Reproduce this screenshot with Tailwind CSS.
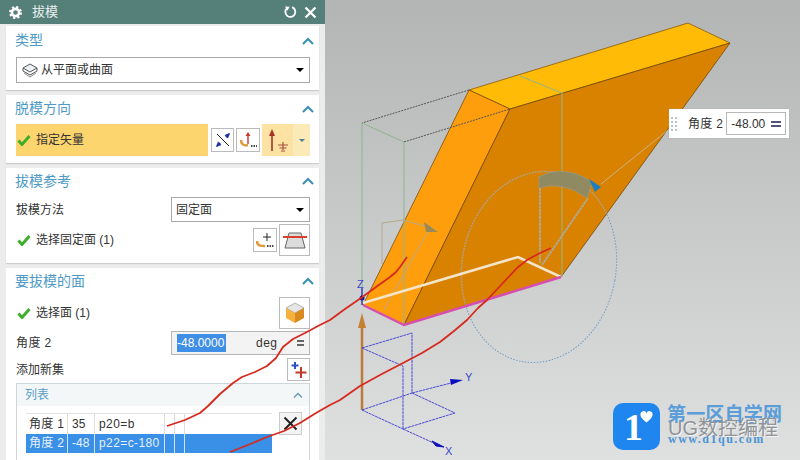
<!DOCTYPE html>
<html lang="zh">
<head>
<meta charset="UTF-8">
<title>拔模</title>
<script src="https://cdn.jsdelivr.net/npm/@tailwindcss/browser@4"></script>
</head>
<body class="m-0 overflow-hidden">
<div class="relative flex w-[800px] h-[460px] overflow-hidden font-['Liberation_Sans','Noto_Sans_CJK_SC',sans-serif] text-[12px] text-[#333]">

  <!-- dialog -->
  <aside class="flex flex-col w-[325px] h-full shrink-0 bg-[#ececec] overflow-hidden">
    <header class="flex items-center h-[24px] shrink-0 bg-[#558079] text-[#e8efee] text-[13px] pl-[9px] pr-[8px]">
      <svg width="13" height="13" viewBox="0 0 13 13"><circle cx="6.5" cy="6.5" r="3.6" fill="none" stroke="#fff" stroke-width="2.6"/><circle cx="6.5" cy="6.5" r="5.5" fill="none" stroke="#fff" stroke-width="2" stroke-dasharray="2.2 2.12"/></svg>
      <span class="ml-[10px]">拔模</span>
      <svg class="ml-auto" width="14" height="14" viewBox="0 0 14 14"><path d="M4 3.2A5 5 0 1 0 9 2.2" fill="none" stroke="#fff" stroke-width="1.8"/><path d="M2 1.5L6.5 1.8 4.5 5.8Z" fill="#fff"/></svg>
      <svg class="ml-[7px]" width="13" height="13" viewBox="0 0 13 13"><path d="M1.5 1.5L11.5 11.5M11.5 1.5L1.5 11.5" stroke="#fff" stroke-width="2.2"/></svg>
    </header>

    <div class="flex flex-col gap-[5px] pt-[2px] px-[6px] flex-1">
      <!-- 类型 -->
      <section class="h-[64px] bg-white pl-[10px] pr-[9px] shadow-[0_1px_1px_#ccc]">
        <div class="flex items-center justify-between h-[28px] pt-[1px] text-[14px] text-[#4d9ac6]">
          <span class="-ml-[1px]">类型</span>
          <svg width="12" height="8" viewBox="0 0 12 8" class="mr-[-4px]"><path d="M1 7L6 2L11 7" fill="none" stroke="#3a8db5" stroke-width="2"/></svg>
        </div>
        <div class="flex items-center justify-between h-[26px] mt-[3px] border border-[#a9a9a9] pl-[4px] pr-[5px]">
          <span class="flex items-center gap-[2px]">
            <svg width="18" height="16" viewBox="0 0 18 16"><path d="M9 2L16 6 9 10 2 6Z" fill="#eef1f3" stroke="#555"/><path d="M2 6V9L9 13 16 9V6" fill="none" stroke="#555"/><path d="M3 11L9 15 15 11" fill="none" stroke="#888"/></svg>
            从平面或曲面
          </span>
          <span class="w-0 h-0 border-x-[4px] border-x-transparent border-t-[4px] border-t-black"></span>
        </div>
      </section>

      <!-- 脱模方向 -->
      <section class="h-[68px] bg-white pl-[10px] pr-[9px] shadow-[0_1px_1px_#ccc]">
        <div class="flex items-center justify-between h-[27px] text-[14px] text-[#4d9ac6]">
          <span class="-ml-[1px]">脱模方向</span>
          <svg width="12" height="8" viewBox="0 0 12 8" class="mr-[-4px]"><path d="M1 7L6 2L11 7" fill="none" stroke="#3a8db5" stroke-width="2"/></svg>
        </div>
        <div class="flex items-center h-[32px] mt-[2px]">
          <div class="flex items-center w-[192px] h-full bg-[#fdd56e] pl-[1px]">
            <svg width="14" height="12" viewBox="0 0 14 12"><path d="M1.5 6.5L5 10.5 12.5 2" fill="none" stroke="#3fae2a" stroke-width="3"/></svg>
            <span class="ml-[5px]">指定矢量</span>
          </div>
          <div class="flex items-center justify-center w-[23px] h-[24px] ml-[3px] border border-[#bbb] bg-white">
            <svg width="16" height="16" viewBox="0 0 16 16"><path d="M2 2L14 14" stroke="#222" stroke-width="1"/><path d="M14 2L11 5M5 11L2 14" stroke="#2230a8" stroke-width="2"/><path d="M15 1L9.5 3 13 6.5ZM1 15L6.5 13 3 9.5Z" fill="#2230a8"/></svg>
          </div>
          <div class="flex items-center justify-center w-[24px] h-[24px] ml-[2px] border border-[#bbb] bg-white">
            <svg width="18" height="18" viewBox="0 0 18 18"><path d="M9 13V4" stroke="#c0392b" stroke-width="1.4"/><path d="M9 1L6.5 5H11.5Z" fill="#c0392b"/><path d="M2 9C2 14 6 15 9 14" fill="none" stroke="#e09a3a" stroke-width="2.4"/><path d="M12 15h1.5M14.5 15H16M17 15h1" stroke="#111" stroke-width="1.6"/></svg>
          </div>
          <div class="flex items-center h-full ml-[2px]">
            <div class="flex items-center justify-center w-[31px] h-full bg-[#fce3a4]">
              <svg width="24" height="24" viewBox="0 0 24 24"><path d="M6 23V6" stroke="#a93226" stroke-width="1.6"/><path d="M6 1L3 8H9Z" fill="#a93226"/><path d="M17 14V22M12 17H22M13.5 20H20.500M15 23H19" stroke="#a8503c" stroke-width="1.2"/></svg>
            </div>
            <div class="flex items-center justify-center w-[17px] h-full bg-[#fbe9b8]">
              <span class="w-0 h-0 border-x-[3px] border-x-transparent border-t-[3px] border-t-[#4a7d9c]"></span>
            </div>
          </div>
        </div>
      </section>

      <!-- 拔模参考 -->
      <section class="h-[95px] bg-white pl-[10px] pr-[9px] shadow-[0_1px_1px_#ccc]">
        <div class="flex items-center justify-between h-[26px] text-[14px] text-[#4d9ac6]">
          <span class="-ml-[1px]">拔模参考</span>
          <svg width="12" height="8" viewBox="0 0 12 8" class="mr-[-4px]"><path d="M1 7L6 2L11 7" fill="none" stroke="#3a8db5" stroke-width="2"/></svg>
        </div>
        <div class="flex items-center justify-between h-[25px] mt-[3px]">
          <span>拔模方法</span>
          <div class="flex items-center justify-between w-[139px] h-full border border-[#a9a9a9] pl-[4px] pr-[5px]">
            <span>固定面</span>
            <span class="w-0 h-0 border-x-[4px] border-x-transparent border-t-[4px] border-t-black"></span>
          </div>
        </div>
        <div class="flex items-center h-[32px] mt-[2px]">
          <svg class="ml-[1px]" width="14" height="12" viewBox="0 0 14 12"><path d="M1.500 6.500L5 10.500 12.500 2" fill="none" stroke="#3fae2a" stroke-width="3"/></svg>
          <span class="ml-[5px]">选择固定面 (1)</span>
          <div class="flex items-center justify-center w-[24px] h-[24px] ml-auto border border-[#bbb] bg-white">
            <svg width="18" height="18" viewBox="0 0 18 18"><path d="M11 2V10M7 6H15" stroke="#222" stroke-width="1"/><path d="M1 10C1 15 5 15 9 15" fill="none" stroke="#e09a3a" stroke-width="2.600"/><path d="M11 15h1.500M13.500 15H15M16 15h1.500" stroke="#111" stroke-width="1.600"/></svg>
          </div>
          <div class="flex items-center justify-center w-[31px] h-[32px] ml-[2px] border border-[#bbb] bg-white">
            <svg width="26" height="24" viewBox="0 0 26 24"><path d="M7 5H19L23 20H3Z" fill="#dcdcdc" stroke="#666"/><path d="M1 9H25" stroke="#d9402c" stroke-width="2"/></svg>
          </div>
        </div>
      </section>

      <!-- 要拔模的面 -->
      <section class="flex-1 min-h-0 bg-white pl-[10px] pr-[9px]">
        <div class="flex items-center justify-between h-[26px] text-[14px] text-[#4d9ac6]">
          <span class="-ml-[1px]">要拔模的面</span>
          <svg width="12" height="8" viewBox="0 0 12 8" class="mr-[-4px]"><path d="M1 7L6 2L11 7" fill="none" stroke="#3a8db5" stroke-width="2"/></svg>
        </div>
        <div class="flex items-center h-[32px] mt-[3px]">
          <svg class="ml-[1px]" width="14" height="12" viewBox="0 0 14 12"><path d="M1.500 6.500L5 10.500 12.500 2" fill="none" stroke="#3fae2a" stroke-width="3"/></svg>
          <span class="ml-[5px]">选择面 (1)</span>
          <div class="flex items-center justify-center w-[31px] h-[32px] ml-auto border border-[#bbb] bg-white">
            <svg width="22" height="24" viewBox="0 0 22 24"><path d="M11 2L20 7 11 12 2 7Z" fill="#e6e6e6" stroke="#999" stroke-width=".7"/><path d="M2 7L11 12V22L2 17Z" fill="#f6b03c"/><path d="M11 12L20 7V17L11 22Z" fill="#d98a1e"/></svg>
          </div>
        </div>
        <div class="flex items-center justify-between h-[24px] mt-[2px]">
          <span class="tracking-[0.4px]">角度 2</span>
          <div class="flex items-center w-[139px] h-full border border-[#b5b5b5] bg-[#f3f3f3] pl-[5px] pr-[4px]">
            <span class="w-[49px] h-[18px] leading-[18px] bg-[#3f8fe6] text-white text-[12px]">-48.0000</span>
            <span class="ml-[30px] tracking-[0.5px]">deg</span>
            <span class="ml-auto mr-[1px] flex flex-col gap-[2px]"><i class="block w-[7px] h-[2px] bg-[#666]"></i><i class="block w-[7px] h-[2px] bg-[#666]"></i></span>
          </div>
        </div>
        <div class="flex items-center justify-between h-[23px] mt-[3px]">
          <span>添加新集</span>
          <div class="flex items-center justify-center w-[23px] h-[23px] border border-[#bbb] bg-white">
            <svg width="18" height="18" viewBox="0 0 18 18"><path d="M5 1V8M1.500 4.500H8.500" stroke="#2b50c8" stroke-width="2"/><path d="M11 6V17M5.500 11.500H16.500" stroke="#c0392b" stroke-width="2"/></svg>
          </div>
        </div>
        <!-- 列表 -->
        <div class="relative h-[90px] mt-[2px] border border-[#cfd6da] bg-white">
          <div class="flex items-center justify-between h-[22px] pl-[8px] pr-[6px] bg-[#f4f7f8] text-[#5aa0c8]">
            <span>列表</span>
            <svg width="10" height="6" viewBox="0 0 10 6"><path d="M1 5.500L5 1.500 9 5.500" fill="none" stroke="#6b9db8" stroke-width="1.500"/></svg>
          </div>
          <div class="flex items-start mt-[7px] pl-[9px]">
            <div class="w-[246px] h-[60px] border-t border-[#e2e2e2] text-[12px]">
              <div class="grid grid-cols-[42px_27px_70px_10px_10px_87px] h-[20px] leading-[20px]">
                <span class="pl-[3px] border-r border-[#ddd] tracking-[0.3px]">角度 1</span>
                <span class="pl-[4px] border-r border-[#ddd]">35</span>
                <span class="pl-[4px] border-r border-[#ddd] tracking-[0.4px]">p20=b</span>
                <span class="border-r border-[#ddd]"></span>
                <span class="border-r border-[#ddd]"></span>
                <span></span>
              </div>
              <div class="grid grid-cols-[42px_27px_70px_10px_10px_87px] h-[19px] leading-[19px] bg-[#3a8fe6] text-[#e6f1fc]">
                <span class="pl-[3px] border-r border-[#cfe3f8] tracking-[0.3px]">角度 2</span>
                <span class="pl-[4px] border-r border-[#cfe3f8]">-48</span>
                <span class="pl-[4px] border-r border-[#cfe3f8] tracking-[0.4px]">p22=c-180</span>
                <span class="border-r border-[#cfe3f8]"></span>
                <span class="border-r border-[#cfe3f8]"></span>
                <span></span>
              </div>
            </div>
            <div class="flex items-center justify-center w-[23px] h-[23px] ml-[7px] -mt-px border border-[#ccc] bg-[#f4f4f4]">
              <svg width="15" height="15" viewBox="0 0 15 15"><path d="M1.500 1.500L13.500 13.500M13.500 1.500L1.500 13.500" stroke="#222" stroke-width="2"/></svg>
            </div>
          </div>
        </div>
      </section>
    </div>
  </aside>

  <!-- graphics window -->
  <main class="flex-1 h-full bg-gradient-to-b from-[#b3b4b4] to-[#dfe0e0]"></main>

  <!-- model and red markup: free canvas lying over both panes -->
  <svg class="absolute left-0 top-0" width="800" height="460" viewBox="0 0 800 460" fill="none">
    <defs>
      <clipPath id="faces"><path d="M469 90L510 109 730 43 561 277 404 325 363 305Z"/></clipPath>
    </defs>
    <!-- outside dotted circle -->
    <ellipse cx="539" cy="267" rx="77" ry="96" transform="rotate(10 539 267)" stroke="#6f9cc6" stroke-width="1" stroke-dasharray="1.500 1.500"/>
    <!-- solid -->
    <path d="M469 90L688 23 730 43 510 109Z" fill="#ffbb05" stroke="#8a5a10" stroke-width=".8"/>
    <path d="M469 90L510 109 404 325 363 305Z" fill="#ff9e0c" stroke="#7a5010" stroke-width=".8"/>
    <path d="M510 109L730 43 561 277 404 325Z" fill="#d98200" stroke="#6e4a10" stroke-width=".8"/>
    <!-- wire box -->
    <path d="M469 90L362 123M404 142L510 109" stroke="#555" stroke-width="1" stroke-dasharray="2 1"/>
    <path d="M362 123L404 142M362 123V305M404 142V325M520 76L562 93M562 93V277" stroke="#8fb592" stroke-width="1"/>
    <!-- angle handle -->
    <g clip-path="url(#faces)"><ellipse cx="539" cy="267" rx="77" ry="96" transform="rotate(10 539 267)" stroke="#b0a088" stroke-width="1.500" stroke-dasharray="2 1"/></g>
    <path d="M539 177Q565 164 592 182L587 198Q562 180 539 188Z" fill="#8f8a62" stroke="#8d9a92" stroke-width=".8"/>
    <path d="M540 188V263M542 265L588 198" stroke="#b3a68f" stroke-width="2" stroke-dasharray="3 .5"/>
    <path d="M601 184L668 130" stroke="#c9b28a" stroke-width="1"/>
    <path d="M589 179L601 187 595 192Z" fill="#1d7fc2"/>
    <!-- small helper arrow -->
    <path d="M382 264V223L403 220 428 227M428 231L384 310" stroke="#b4a88e" stroke-width="1"/>
    <path d="M424 222L438 232 426 232Z" fill="#9a8a58"/>
    <!-- edges -->
    <path d="M363 303L518 257 561 277" stroke="#f2e5cc" stroke-width="2.500"/>
    <path d="M363 305L404 325 561 277" stroke="#d64fb0" stroke-width="2.500"/>
    <!-- csys -->
    <path d="M362 288V305" stroke="#2222cc" stroke-width="1.200"/>
    <circle cx="362" cy="298" r="2.500" fill="#1c1c8c"/>
    <path d="M362 410V322" stroke="#b97a3a" stroke-width="2.500"/>
    <path d="M362 313L358 328H366Z" fill="#c5812f"/>
    <path d="M362 348L412 333V393M362 348L403 366V429M362 410L403 429M362 410L412 393M412 393L455 413 403 429M403 429L438 445M412 393L455 382" stroke="#4b4bd6" stroke-width="1" stroke-dasharray="3 .6"/>
    <path d="M450 379L463 380 451 385Z" fill="#0d0dc0"/>
    <path d="M432 441L444 447 436 446Z" fill="#0d0dc0" stroke="#0d0dc0"/>
    <text x="357" y="288" font-size="11" fill="#3a48c8" font-family="Liberation Sans">Z</text>
    <text x="465" y="381" font-size="11" fill="#3a48c8" font-family="Liberation Sans">Y</text>
    <text x="445" y="455" font-size="11" fill="#3a48c8" font-family="Liberation Sans">X</text>
    <!-- red markup -->
    <polyline points="167,426 185,420 200,413 208,406 220,394 233,383 242,377 255,372 267,366 276,358 283,347 293,339 305,333 318,326 330,320 345,309 361,298 376,287 390,277 396,272 400,267 407,257" stroke="#d62a1e" stroke-width="1.800" stroke-linejoin="round"/>
    <polyline points="230,452 248,445 267,437 284,431 300,423 316,413 330,405 340,400 360,386 380,375 403,363 422,353 440,342 454,331 467,320 478,308 487,300 502,284 517,268 527,260 540,253 551,248" stroke="#d62a1e" stroke-width="1.800" stroke-linejoin="round"/>
  </svg>

  <!-- on-screen input -->
  <div class="absolute left-[669px] top-[109px] flex items-center w-[120px] h-[29px] bg-white shadow-[0_0_1px_#999]">
    <span class="grid grid-cols-2 gap-x-[2px] gap-y-[2px] ml-[2px] w-[6px]"><i class="block w-[2px] h-[2px] bg-[#b5c4cc]"></i><i class="block w-[2px] h-[2px] bg-[#b5c4cc]"></i><i class="block w-[2px] h-[2px] bg-[#b5c4cc]"></i><i class="block w-[2px] h-[2px] bg-[#b5c4cc]"></i><i class="block w-[2px] h-[2px] bg-[#b5c4cc]"></i><i class="block w-[2px] h-[2px] bg-[#b5c4cc]"></i><i class="block w-[2px] h-[2px] bg-[#b5c4cc]"></i><i class="block w-[2px] h-[2px] bg-[#b5c4cc]"></i></span>
    <span class="ml-[11px] tracking-[0.3px]">角度 2</span>
    <div class="flex items-center w-[60px] h-[23px] ml-[3px] border border-[#b8b8b8] pl-[4px] text-[12px]">
      <span>-48.00</span>
      <span class="ml-auto mr-[4px] flex flex-col gap-[2px]"><i class="block w-[10px] h-[2px] bg-[#55557a]"></i><i class="block w-[10px] h-[2px] bg-[#55557a]"></i></span>
    </div>
  </div>

  <!-- site logo -->
  <div class="absolute left-[613px] top-[403px] flex items-center justify-center w-[47px] h-[47px] rounded-[10px] bg-[#1e86ee]">
    <span class="font-['Liberation_Serif',serif] font-bold text-[38px] leading-none text-white -ml-[6px]">1</span>
    <svg class="absolute left-[27px] top-[8px]" width="13" height="12" viewBox="0 0 13 12"><path d="M6.500 11.500C2 8 .5 6 .5 3.800A3 3 0 0 1 6.500 2.500 3 3 0 0 1 12.500 3.800C12.500 6 11 8 6.500 11.500Z" fill="#fff"/></svg>
  </div>
  <div class="absolute left-[667px] top-[403px] text-[19px] leading-[24px] tracking-[0.2px] whitespace-nowrap font-bold text-[#5a9dd8] font-['Liberation_Serif','Noto_Sans_CJK_SC',serif]">第一区自学网</div>
  <div class="absolute left-[668px] top-[432px] text-[12px] leading-[15px] tracking-[1.500px] whitespace-nowrap font-bold text-[#4b94d4] font-['Liberation_Serif',serif]">www.d1qu.com</div>
  <div class="absolute left-[668px] top-[418px] text-[20px] leading-[20px] whitespace-nowrap text-[#8f9499] [text-shadow:1px_1px_0_#f4f4f4]">UG数控编程</div>
</div>
</body>
</html>
